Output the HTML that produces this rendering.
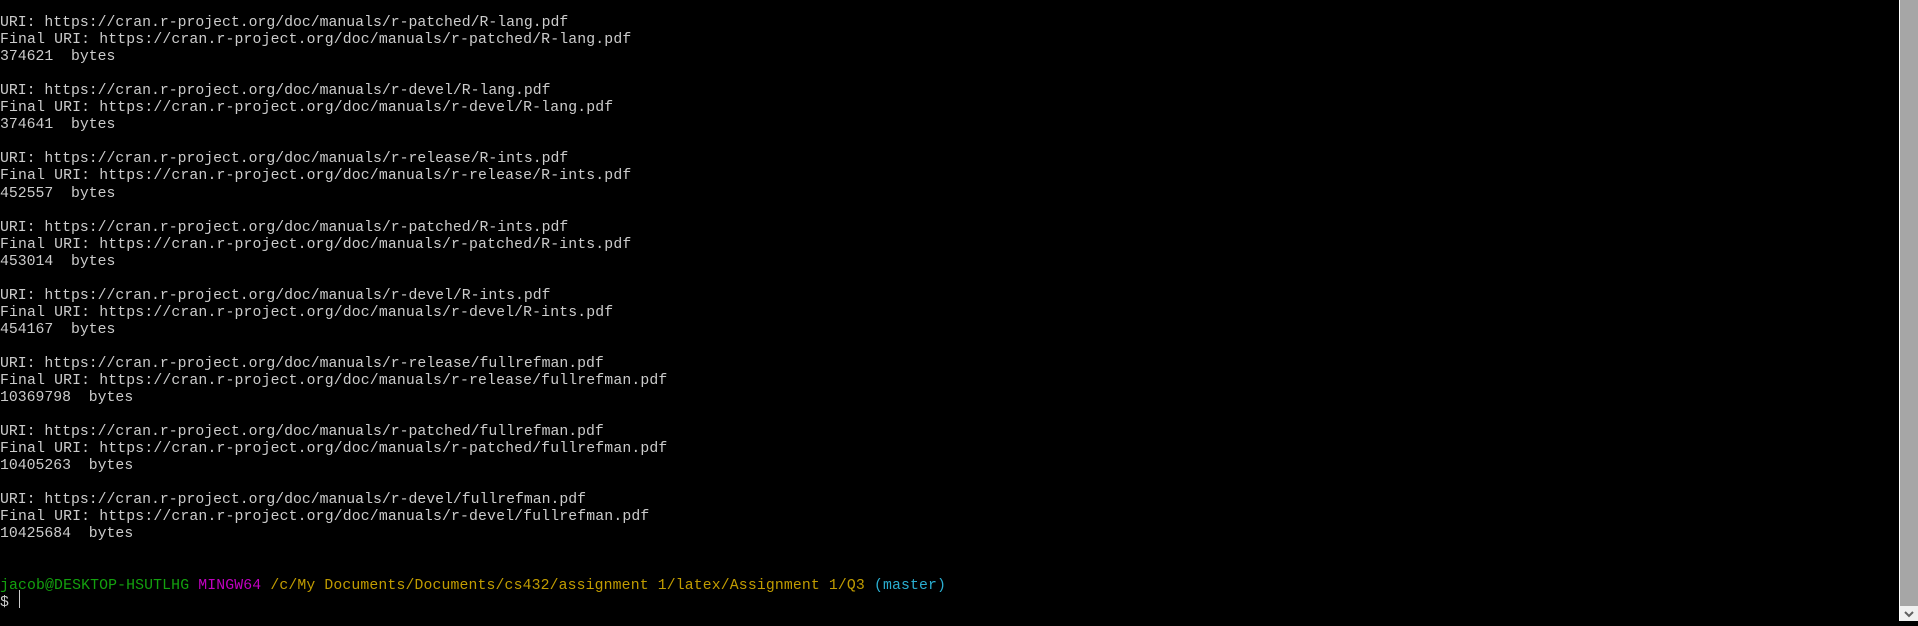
<!DOCTYPE html>
<html><head><style>
html,body{margin:0;padding:0;background:#000;width:1918px;height:621px;overflow:hidden}
pre{position:absolute;left:0;top:-2px;margin:0;font-family:"Liberation Mono",monospace;font-size:14.8px;line-height:17.05px;color:#cccccc;white-space:pre}
.f{letter-spacing:0.14px}
.p{letter-spacing:0.13px}
.g{color:#13a10e}.m{color:#c000c0}.y{color:#c19c00}.c{color:#2aaed0}
#cur{position:absolute;left:19px;top:590px;width:1px;height:18px;background:#ccc}
#sb{position:absolute;left:1899px;top:0;width:1px;height:621px;background:#fff}
#th{position:absolute;left:1900px;top:0;width:18px;height:606px;background:#a6a6a6}
#bt{position:absolute;left:1900px;top:606px;width:18px;height:15px;background:#f0f0f0}
</style></head><body>
<pre>

URI: https://cran.r-project.org/doc/manuals/r-patched/R-lang.pdf
<span class="f">Final URI: https://cran.r-project.org/doc/manuals/r-patched/R-lang.pdf</span>
374621  bytes

URI: https://cran.r-project.org/doc/manuals/r-devel/R-lang.pdf
<span class="f">Final URI: https://cran.r-project.org/doc/manuals/r-devel/R-lang.pdf</span>
374641  bytes

URI: https://cran.r-project.org/doc/manuals/r-release/R-ints.pdf
<span class="f">Final URI: https://cran.r-project.org/doc/manuals/r-release/R-ints.pdf</span>
452557  bytes

URI: https://cran.r-project.org/doc/manuals/r-patched/R-ints.pdf
<span class="f">Final URI: https://cran.r-project.org/doc/manuals/r-patched/R-ints.pdf</span>
453014  bytes

URI: https://cran.r-project.org/doc/manuals/r-devel/R-ints.pdf
<span class="f">Final URI: https://cran.r-project.org/doc/manuals/r-devel/R-ints.pdf</span>
454167  bytes

URI: https://cran.r-project.org/doc/manuals/r-release/fullrefman.pdf
<span class="f">Final URI: https://cran.r-project.org/doc/manuals/r-release/fullrefman.pdf</span>
10369798  bytes

URI: https://cran.r-project.org/doc/manuals/r-patched/fullrefman.pdf
<span class="f">Final URI: https://cran.r-project.org/doc/manuals/r-patched/fullrefman.pdf</span>
10405263  bytes

URI: https://cran.r-project.org/doc/manuals/r-devel/fullrefman.pdf
<span class="f">Final URI: https://cran.r-project.org/doc/manuals/r-devel/fullrefman.pdf</span>
10425684  bytes


<span class="p"><span class="g">jacob@DESKTOP-HSUTLHG</span> <span class="m">MINGW64</span> <span class="y">/c/My Documents/Documents/cs432/assignment 1/latex/Assignment 1/Q3</span> <span class="c">(master)</span></span>
$
</pre>
<div id="cur"></div>
<div id="sb"></div><div id="th"></div>
<div id="bt"><svg width="18" height="15" viewBox="0 0 18 15"><path d="M5 6 L9 10 L13 6" fill="none" stroke="#606060" stroke-width="2"/></svg></div>
</body></html>
